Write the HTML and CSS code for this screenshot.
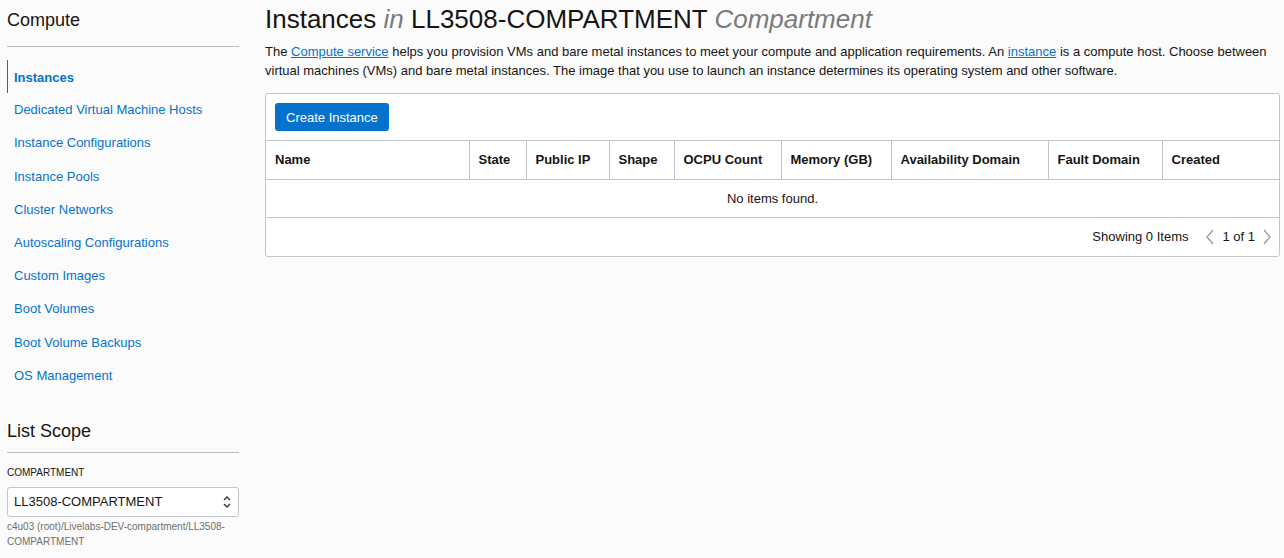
FILE: index.html
```html
<!DOCTYPE html>
<html>
<head>
<meta charset="utf-8">
<link rel="stylesheet" href="styles.css">
</head>
<body>
<div class="page">
  <aside class="sidebar">
    <h2 class="side-title">Compute</h2>
    <nav class="side-nav">
      <a class="nav-item active">Instances</a>
      <a class="nav-item">Dedicated Virtual Machine Hosts</a>
      <a class="nav-item">Instance Configurations</a>
      <a class="nav-item">Instance Pools</a>
      <a class="nav-item">Cluster Networks</a>
      <a class="nav-item">Autoscaling Configurations</a>
      <a class="nav-item">Custom Images</a>
      <a class="nav-item">Boot Volumes</a>
      <a class="nav-item">Boot Volume Backups</a>
      <a class="nav-item">OS Management</a>
    </nav>
    <h2 class="side-title scope">List Scope</h2>
    <div class="field-label">COMPARTMENT</div>
    <div class="select">
      <span>LL3508-COMPARTMENT</span>
      <svg class="chev" width="10" height="14" viewBox="0 0 10 14"><path d="M2 5 L5 2 L8 5 M2 9 L5 12 L8 9" fill="none" stroke="#333" stroke-width="1.4"/></svg>
    </div>
    <div class="path">c4u03 (root)/Livelabs-DEV-compartment/LL3508-COMPARTMENT</div>
  </aside>
  <main class="main">
    <h1 class="title">Instances <em>in</em> LL3508-COMPARTMENT <em>Compartment</em></h1>
    <p class="desc">The <span class="link">Compute service</span> helps you provision VMs and bare metal instances to meet your compute and application requirements. An <span class="link">instance</span> is a compute host. Choose between virtual machines (VMs) and bare metal instances. The image that you use to launch an instance determines its operating system and other software.</p>
    <div class="panel">
      <div class="toolbar"><button class="btn">Create Instance</button></div>
      <table class="grid">
        <colgroup>
          <col style="width:203px"><col style="width:57px"><col style="width:83px"><col style="width:65px"><col style="width:107px"><col style="width:110px"><col style="width:157px"><col style="width:114px"><col>
        </colgroup>
        <thead>
          <tr><th>Name</th><th>State</th><th>Public IP</th><th>Shape</th><th>OCPU Count</th><th>Memory (GB)</th><th>Availability Domain</th><th>Fault Domain</th><th>Created</th></tr>
        </thead>
        <tbody>
          <tr><td colspan="9" class="empty">No items found.</td></tr>
        </tbody>
      </table>
      <div class="footer">
        <span class="showing">Showing 0 Items</span>
        <span class="pager">
          <svg width="10" height="16" viewBox="0 0 10 16"><path d="M8 1 L2 8 L8 15" fill="none" stroke="#9a9a9a" stroke-width="1.3"/></svg>
          <span>1 of 1</span>
          <svg width="10" height="16" viewBox="0 0 10 16"><path d="M2 1 L8 8 L2 15" fill="none" stroke="#9a9a9a" stroke-width="1.3"/></svg>
        </span>
      </div>
    </div>
  </main>
</div>
</body>
</html>
```
FILE: styles.css
```css
* { box-sizing: border-box; }
html, body { margin: 0; padding: 0; }
body {
  background: #fbfbfb;
  font-family: "Liberation Sans", Arial, sans-serif;
  color: #161513;
  font-size: 13px;
}
.page {
  display: flex;
  width: 1284px;
  height: 558px;
  overflow: hidden;
}
.sidebar {
  width: 232px;
  margin-left: 7px;
  flex: none;
}
.side-title {
  font-size: 18px;
  font-weight: normal;
  margin: 0;
  padding-top: 10px;
  height: 47px;
  border-bottom: 1px solid #b9bcc0;
  color: #161513;
}
.side-nav {
  display: flex;
  flex-direction: column;
  margin-top: 13px;
}
.nav-item {
  display: block;
  color: #0572ce;
  font-size: 13px;
  line-height: 15px;
  padding: 9px 0 9px 6px;
  height: 33.2px;
  border-left: 1px solid transparent;
}
.nav-item.active {
  font-weight: bold;
  border-left: 1px solid #0572ce;
  padding-left: 6px;
  padding-top: 10px;
}
.side-title.scope {
  margin-top: 18px;
  padding-top: 11px;
  height: 43px;
}
.field-label {
  font-size: 10px;
  margin-top: 14px;
  color: #161513;
  line-height: 12px;
}
.select {
  margin-top: 8px;
  height: 30px;
  border: 1px solid #c2c5c9;
  border-radius: 3px;
  background: #fff;
  display: flex;
  align-items: center;
  justify-content: space-between;
  padding: 0 6px 0 6px;
  font-size: 13px;
}
.path {
  font-size: 10px;
  color: #6f6f6f;
  line-height: 15px;
  margin-top: 2px;
}
.main {
  margin-left: 26px;
  width: 1015px;
  flex: none;
}
.title {
  font-size: 26px;
  font-weight: normal;
  margin: 0;
  padding-top: 4px;
  line-height: 30px;
  color: #161513;
  white-space: nowrap;
}
.title em {
  color: #7a7a7a;
  font-style: italic;
}
.desc {
  margin: 8px 0 0 0;
  line-height: 19px;
  font-size: 13px;
}
.link {
  color: #0572ce;
  text-decoration: underline;
}
.panel {
  margin-top: 13px;
  border: 1px solid #c2c5c9;
  border-radius: 3px;
  background: #fff;
}
.toolbar {
  padding: 9px 9px;
  border-bottom: 1px solid #c2c5c9;
}
.btn {
  background: #0572ce;
  color: #fff;
  border: none;
  border-radius: 3px;
  height: 28px;
  padding: 0 11px;
  font-family: inherit;
  font-size: 13px;
}
.grid {
  width: 100%;
  border-collapse: collapse;
  table-layout: fixed;
}
.grid th {
  text-align: left;
  font-weight: bold;
  height: 38px;
  padding: 0 9px;
  border-right: 1px solid #c2c5c9;
  border-bottom: 1px solid #c2c5c9;
  white-space: nowrap;
}
.grid th:last-child { border-right: none; }
.grid td.empty {
  text-align: center;
  height: 38px;
  border-bottom: 1px solid #c2c5c9;
}
.footer {
  display: flex;
  justify-content: flex-end;
  align-items: center;
  height: 38px;
  padding-right: 7px;
  gap: 17px;
}
.pager {
  display: flex;
  align-items: center;
  gap: 7px;
}
```
